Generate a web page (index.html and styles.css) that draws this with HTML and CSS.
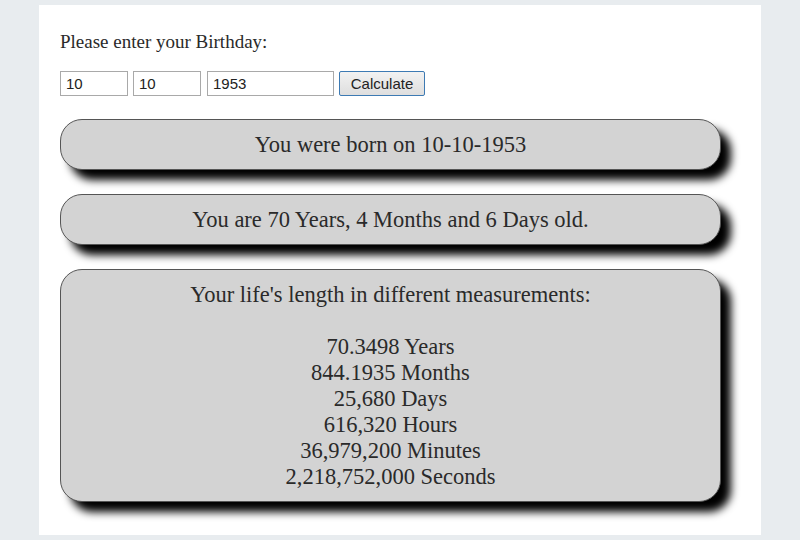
FILE: index.html
```html
<!DOCTYPE html>
<html>
<head>
<meta charset="utf-8">
<link rel="stylesheet" href="styles.css">
</head>
<body>
<div class="panel">
  <p class="prompt">Please enter your Birthday:</p>
  <div class="form-row">
    <input class="field field-short" type="text" value="10">
    <input class="field field-short" type="text" value="10">
    <input class="field field-long" type="text" value="1953">
    <button class="calc-btn" type="button">Calculate</button>
  </div>
  <div class="result">You were born on 10-10-1953</div>
  <div class="result">You are 70 Years, 4 Months and 6 Days old.</div>
  <div class="result">Your life's length in different measurements:<br><br>70.3498 Years<br>844.1935 Months<br>25,680 Days<br>616,320 Hours<br>36,979,200 Minutes<br>2,218,752,000 Seconds</div>
</div>
</body>
</html>
```

FILE: styles.css
```css
html, body {
  margin: 0;
  padding: 0;
}
body {
  background: #e8ecef;
  font-family: "Liberation Serif", "Times New Roman", serif;
  color: #2a2a2a;
  height: 540px;
  overflow: hidden;
}
.panel {
  background: #fff;
  width: 680px;
  margin: 5px auto 0;
  padding: 26px 21px 33px 21px;
}
.prompt {
  margin: 0;
  font-size: 19px;
  line-height: 22px;
}
.form-row {
  display: flex;
  gap: 5px;
  margin-top: 18px;
  height: 25px;
}
.field {
  box-sizing: border-box;
  height: 25px;
  margin: 0;
  border: 1px solid #a9a9a9;
  padding: 1px 5px;
  font-family: "Liberation Sans", Arial, sans-serif;
  font-size: 15px;
  color: #222;
  background: #fff;
}
.field-short {
  width: 68px;
}
.field-long {
  width: 127px;
  margin-left: 1px;
}
.calc-btn {
  box-sizing: border-box;
  width: 86px;
  height: 25px;
  margin: 0;
  padding: 0;
  border: 1px solid #3d7ab3;
  border-radius: 2px;
  background: linear-gradient(#f2f2f2, #dedede);
  font-family: "Liberation Sans", Arial, sans-serif;
  font-size: 15px;
  color: #222;
}
.result {
  margin: 23px 19px 0 0;
  background: #d3d3d3;
  border: 1px solid #555;
  border-radius: 22px;
  box-shadow: 10px 10px 8px #000;
  padding: 12px 10px 11px;
  text-align: center;
  font-size: 22.5px;
  line-height: 26px;
  color: #2a2a2a;
}
.result + .result {
  margin-top: 24px;
}
```
